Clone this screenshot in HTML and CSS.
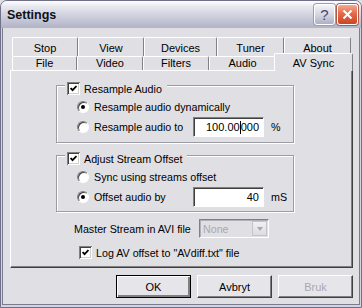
FILE: index.html
```html
<!DOCTYPE html>
<html lang="en">
<head>
  <meta charset="UTF-8">
  <title>Settings</title>
  <link rel="stylesheet" href="styles.css">
</head>
<body>
  <div class="window">
    <div class="titlebar">
      <span class="title">Settings</span>
      <div class="title-buttons">
        <span class="tbtn help">?</span>
        <span class="tbtn close">
          <svg width="11" height="11" viewBox="0 0 11 11"><path d="M1.5 1.5 L9.5 9.5 M9.5 1.5 L1.5 9.5" stroke="#fff" stroke-width="2" fill="none"/></svg>
        </span>
      </div>
    </div>

    <div class="dialog">
      <div class="tabs">
        <div class="tab-row back">
          <div class="tab">Stop</div>
          <div class="tab">View</div>
          <div class="tab">Devices</div>
          <div class="tab">Tuner</div>
          <div class="tab">About</div>
        </div>
        <div class="tab-row front">
          <div class="tab">File</div>
          <div class="tab">Video</div>
          <div class="tab">Filters</div>
          <div class="tab">Audio</div>
          <div class="tab active">AV Sync</div>
        </div>
      </div>

      <div class="panel">
        <fieldset class="group">
          <legend><span class="check-label"><span class="checkbox checked"></span>Resample Audio</span></legend>
          <div class="opt-row"><span class="radio on"></span><span class="opt-text">Resample audio dynamically</span></div>
          <div class="opt-row">
            <span class="radio"></span><span class="opt-text fixed">Resample audio to</span>
            <span class="edit">100.00<span class="caret"></span>000</span><span class="unit">%</span>
          </div>
        </fieldset>

        <fieldset class="group second">
          <legend><span class="check-label"><span class="checkbox checked"></span>Adjust Stream Offset</span></legend>
          <div class="opt-row"><span class="radio"></span><span class="opt-text">Sync using streams offset</span></div>
          <div class="opt-row">
            <span class="radio on"></span><span class="opt-text fixed">Offset audio by</span>
            <span class="edit">40</span><span class="unit">mS</span>
          </div>
        </fieldset>

        <div class="master-row">
          <span class="master-label">Master Stream in AVI file</span>
          <div class="combo disabled"><span class="combo-text">None</span><span class="combo-btn"></span></div>
        </div>

        <div class="log-row">
          <span class="check-label"><span class="checkbox checked"></span>Log AV offset to "AVdiff.txt" file</span>
        </div>
      </div>

      <div class="buttons">
        <button class="btn default">OK</button>
        <button class="btn">Avbryt</button>
        <button class="btn" disabled>Bruk</button>
      </div>
    </div>
  </div>
</body>
</html>
```

FILE: styles.css
```css
body {
  margin: 0;
  padding: 0;
  background: #e0dfe3;
  font-family: "Liberation Sans", Arial, sans-serif;
  font-size: 10.7px;
  color: #000;
}
.window {
  width: 362px;
  height: 308px;
  box-sizing: border-box;
  border: 1px solid #70708a;
  border-radius: 7px 7px 0 0;
  background: #d4d4de;
  overflow: hidden;
}
.titlebar {
  height: 27px;
  display: flex;
  align-items: center;
  justify-content: space-between;
  padding: 0 3px 0 6px;
  background: linear-gradient(#fdfdfe, #e6e7ee 22%, #d2d3df 50%, #bec0d1 80%, #b1b3c6);
}
.title {
  font-weight: bold;
  font-size: 12.5px;
  color: #101018;
}
.title-buttons {
  display: flex;
  gap: 2px;
}
.tbtn {
  width: 21px;
  height: 21px;
  box-sizing: border-box;
  border: 1px solid #fff;
  border-radius: 3px;
  display: flex;
  align-items: center;
  justify-content: center;
}
.help {
  background: linear-gradient(#f4f4f8, #d2d3e0 55%, #adafc4);
  color: #44466a;
  font-size: 15px;
  box-shadow: 0 0 0 1px #9a9cb2;
}
.close {
  background: linear-gradient(#f3ab94, #e46a48 45%, #cc4426);
  box-shadow: 0 0 0 1px #b05a4a;
}

.dialog {
  margin: 0 1px 2px;
  height: 277px;
  box-sizing: border-box;
  border: 1px solid #7b7b90;
  border-top: none;
  background: #e0dfe3;
  padding: 9px 6px 0 7px;
}

/* tabs */
.tabs {
  margin: 0 2px;
}
.tab-row {
  display: grid;
}
.tab-row.back {
  grid-template-columns: 66px 66px 73px 67px 67px;
  height: 19px;
}
.tab-row.front {
  grid-template-columns: 65px 66px 66px 67px 75px;
  height: 14px;
}
.tab {
  box-sizing: border-box;
  border-top: 1px solid #fff;
  border-left: 1px solid #fff;
  border-right: 1px solid #80808a;
  border-radius: 2px 2px 0 0;
  background: #e0dfe3;
  text-align: center;
  font-size: 11px;
}
.back .tab {
  padding-top: 4px;
}
.front .tab {
  padding-top: 0;
  line-height: 13px;
}
.tab.active {
  position: relative;
  z-index: 1;
  margin: -3px -2px -1px;
  padding-top: 3px;
}

.panel {
  height: 198px;
  box-sizing: border-box;
  border: 1px solid;
  border-color: #fff #404040 #404040 #fff;
  box-shadow: inset -1px -1px #808080;
  padding-top: 5px;
}

/* group boxes */
.group {
  margin: 0 0 0 45px;
  width: 238px;
  box-sizing: border-box;
  min-inline-size: 0;
  border: 1px solid #9c9ca4;
  box-shadow: inset 1px 1px #fff, 1px 1px #fff;
  padding: 2px 0 5px 8px;
}
.group.second {
  margin-top: 3px;
  padding-bottom: 4px;
}
.group legend {
  padding: 6px 5px 0 2px;
  background: #e0dfe3;
}
.check-label {
  display: flex;
  align-items: center;
  gap: 4px;
  height: 13px;
}
.checkbox {
  width: 13px;
  height: 13px;
  box-sizing: border-box;
  background: #fff;
  box-shadow: inset 1px 1px #808080, inset -1px -1px #fff, inset 2px 2px #404040, inset -2px -2px #d4d0c8;
  display: flex;
  align-items: center;
  justify-content: center;
}
.checkbox.checked::after {
  content: "";
  width: 7px;
  height: 7px;
  background: url("data:image/svg+xml,%3Csvg xmlns='http://www.w3.org/2000/svg' width='7' height='7'%3E%3Cpath d='M0.6 3 L2.6 5.2 L6.5 1' stroke='black' stroke-width='1.8' fill='none'/%3E%3C/svg%3E") no-repeat;
}
.opt-row {
  display: flex;
  align-items: center;
  height: 20px;
  margin-left: 12px;
}
.radio {
  width: 12px;
  height: 12px;
  box-sizing: border-box;
  border-radius: 50%;
  border: 1px solid;
  border-color: #808080 #fff #fff #808080;
  background: #fff;
  box-shadow: inset 1px 1px #404040;
  display: flex;
  align-items: center;
  justify-content: center;
}
.radio.on::after {
  content: "";
  width: 4px;
  height: 4px;
  border-radius: 50%;
  background: #000;
}
.opt-text {
  margin-left: 5px;
}
.opt-text.fixed {
  width: 99px;
}
.edit {
  width: 71px;
  height: 20px;
  box-sizing: border-box;
  background: #fff;
  border: 1px solid;
  border-color: #808080 #fff #fff #808080;
  box-shadow: inset 1px 1px #404040;
  text-align: right;
  padding: 3px 4px 0 0;
  font-size: 11px;
}
.caret {
  display: inline-block;
  width: 1px;
  height: 13px;
  background: #000;
  vertical-align: -3px;
}
.unit {
  margin-left: 7px;
}

/* master stream */
.master-row {
  display: flex;
  align-items: center;
  margin: 7px 0 0 63px;
  height: 19px;
}
.master-label {
  width: 125px;
}
.combo {
  width: 70px;
  height: 19px;
  box-sizing: border-box;
  border: 1px solid;
  border-color: #808080 #fff #fff #808080;
  box-shadow: inset 1px 1px #b0b0b8;
  display: flex;
  align-items: center;
  justify-content: space-between;
  padding: 0 1px 0 3px;
}
.combo.disabled .combo-text {
  color: #a8a8b0;
}
.combo-btn {
  width: 15px;
  height: 15px;
  box-sizing: border-box;
  border: 1px solid #c4c4cc;
  background: linear-gradient(#f0f0f4, #dcdce2);
  display: flex;
  align-items: center;
  justify-content: center;
}
.combo-btn::after {
  content: "";
  border-left: 3px solid transparent;
  border-right: 3px solid transparent;
  border-top: 4px solid #a8a8b0;
}

.log-row {
  margin: 8px 0 0 68px;
}

/* buttons */
.buttons {
  display: flex;
  justify-content: flex-end;
  gap: 6px;
  margin-top: 7px;
}
.btn {
  width: 75px;
  height: 23px;
  box-sizing: border-box;
  font-family: "Liberation Sans", Arial, sans-serif;
  font-size: 11px;
  color: #000;
  background: #e6e6ea;
  border: 1px solid;
  border-color: #fff #404040 #404040 #fff;
  box-shadow: inset -1px -1px #808080;
  padding: 0;
}
.btn.default {
  border-color: #000;
  box-shadow: inset 1px 1px #fff, inset -2px -2px #808080;
}
.btn:disabled {
  color: #a8a8b0;
}
```
